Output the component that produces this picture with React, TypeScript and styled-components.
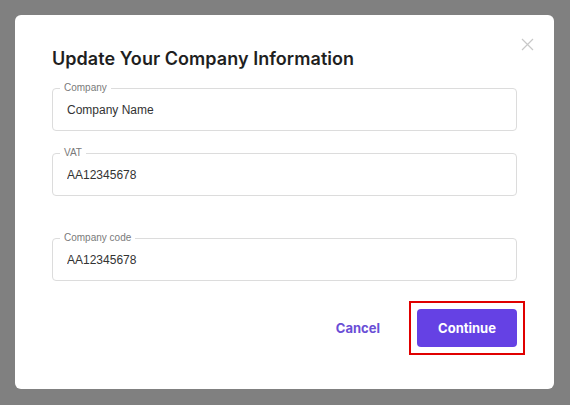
import React from 'react';
import styled, {createGlobalStyle} from 'styled-components';

const GlobalStyle = createGlobalStyle`
	html,
	body {
		margin: 0;
		padding: 0;
		background: #808080;
	}

	* {
		box-sizing: border-box;
	}
`;

const Backdrop = styled.div`
	width: 570px;
	height: 405px;
	padding: 15px 16px 16px 15px;
	background: #808080;
`;

const Dialog = styled.div`
	position: relative;
	display: flex;
	flex-direction: column;
	height: 374px;
	padding: 32px 37px 0 37px;
	background: #fff;
	border-radius: 6px;
`;

const CloseButton = styled.button`
	position: absolute;
	top: 20px;
	right: 18px;
	width: 18px;
	height: 18px;
	padding: 0;
	border: none;
	background: none;
	color: #c8c8c8;
	display: flex;
	align-items: center;
	justify-content: center;
	cursor: pointer;
`;

const Title = styled.h2`
	margin: 0 0 17px;
	font-family: Inter, 'Noto Sans', sans-serif;
	font-size: 18px;
	line-height: 24px;
	font-weight: 600;
	color: #1f1f1f;
	letter-spacing: 0.05px;
`;

const Fields = styled.div`
	display: flex;
	flex-direction: column;
`;

const Field = styled.label<{$spaced?: boolean}>`
	position: relative;
	display: flex;
	align-items: center;
	height: 43px;
	margin-bottom: ${({$spaced}) => ($spaced ? '42px' : '22px')};
	padding: 0 14px;
	border: 1px solid #dcdcdc;
	border-radius: 4px;

	&:last-child {
		margin-bottom: 0;
	}
`;

const FieldLabel = styled.span`
	position: absolute;
	top: -7px;
	left: 7px;
	padding: 0 4px;
	background: #fff;
	font-family: 'Liberation Sans', Arial, sans-serif;
	font-size: 10px;
	line-height: 12px;
	color: #7a7a7a;
`;

const Input = styled.input`
	width: 100%;
	border: none;
	outline: none;
	padding: 0;
	background: transparent;
	font-family: 'Liberation Sans', Arial, sans-serif;
	font-size: 12px;
	color: #333;
`;

const Footer = styled.div`
	display: flex;
	justify-content: flex-end;
	align-items: center;
	gap: 21px;
	margin-top: 28px;
`;

const TextButton = styled.button`
	padding: 8px 16px;
	border: none;
	background: none;
	font-family: Inter, 'Noto Sans', sans-serif;
	font-size: 13px;
	font-weight: 700;
	color: #6a4ed6;
	cursor: pointer;
`;

const PrimaryButton = styled.button<{$highlighted?: boolean}>`
	position: relative;
	width: 100px;
	height: 38px;
	border: none;
	border-radius: 4px;
	background: #6541e4;
	font-family: Inter, 'Noto Sans', sans-serif;
	font-size: 13px;
	font-weight: 700;
	color: #fff;
	cursor: pointer;

	&::after {
		content: '';
		display: ${({$highlighted}) => ($highlighted ? 'block' : 'none')};
		position: absolute;
		inset: -8px;
		border: 2px solid #e00000;
		pointer-events: none;
	}
`;

const fields = [
	{label: 'Company', value: 'Company Name'},
	{label: 'VAT', value: 'AA12345678', spaced: true},
	{label: 'Company code', value: 'AA12345678'},
];

export default function App() {
	return (
		<>
			<GlobalStyle />
			<Backdrop>
				<Dialog>
					<CloseButton aria-label="Close">
						<svg width="13" height="13" viewBox="0 0 13 13">
							<path d="M1 1 L12 12 M12 1 L1 12" stroke="currentColor" strokeWidth="1.2" />
						</svg>
					</CloseButton>
					<Title>Update Your Company Information</Title>
					<Fields>
						{fields.map((f) => (
							<Field key={f.label} $spaced={f.spaced}>
								<FieldLabel>{f.label}</FieldLabel>
								<Input defaultValue={f.value} />
							</Field>
						))}
					</Fields>
					<Footer>
						<TextButton>Cancel</TextButton>
						<PrimaryButton $highlighted>Continue</PrimaryButton>
					</Footer>
				</Dialog>
			</Backdrop>
		</>
	);
}
